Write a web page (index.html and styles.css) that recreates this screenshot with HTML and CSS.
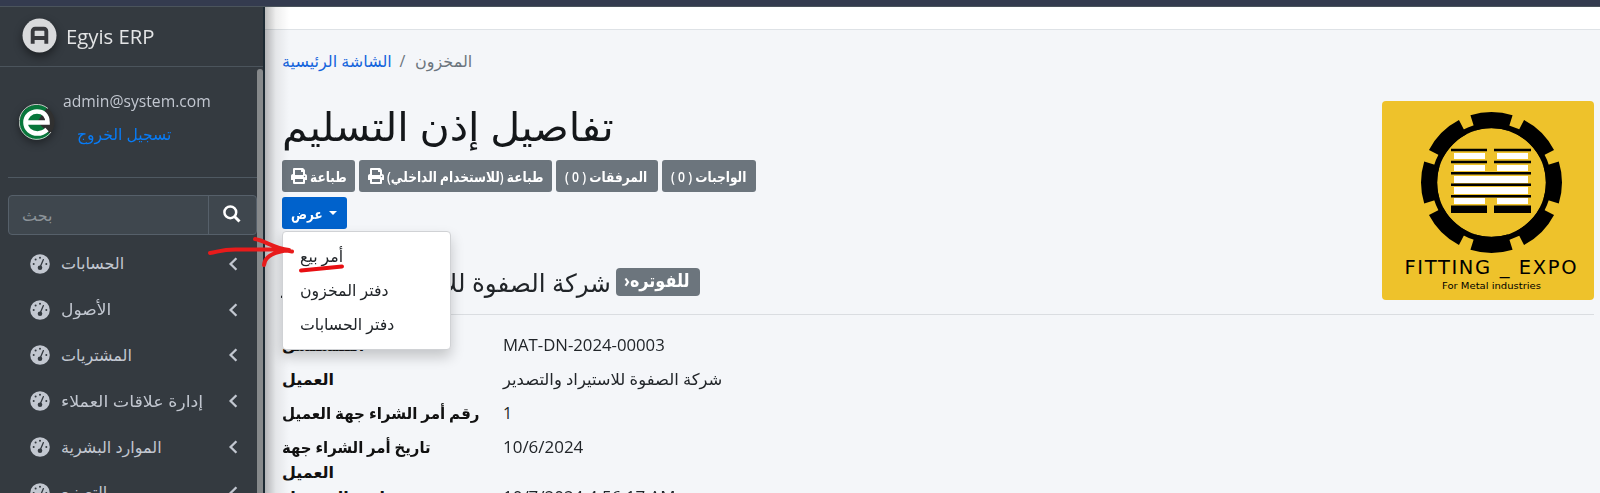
FILE: index.html
```html
<!DOCTYPE html>
<html lang="ar">
<head>
<meta charset="utf-8">
<title>Egyis ERP</title>
<link rel="stylesheet" href="styles.css">
</head>
<body>
<svg class="defs" width="0" height="0">
  <symbol id="gauge" viewBox="0 0 20 20">
    <circle cx="10" cy="10" r="9.8" fill="#c2c7d0"/>
    <g fill="#343a40"><circle cx="10" cy="3.700" r="1"/><circle cx="5.600" cy="5.600" r="1"/><circle cx="3.700" cy="10" r="1"/><circle cx="16.300" cy="10" r="1"/><circle cx="10" cy="13.800" r="2.300"/></g>
    <path d="M10.300 12.800L13.400 5.600" stroke="#343a40" stroke-width="1.300" stroke-linecap="round"/>
  </symbol>
  <symbol id="chev" viewBox="0 0 10 14"><path d="M8.400 1.200L2.600 7l5.800 5.800" fill="none" stroke="#c2c7d0" stroke-width="2.300"/></symbol>
  <symbol id="print" viewBox="0 0 512 512"><path fill="#fff" d="M448 192V77.300a32 32 0 0 0-9.400-22.600L393.400 9.400A32 32 0 0 0 370.700 0H96a32 32 0 0 0-32 32v160c-35.300 0-64 28.700-64 64v112a16 16 0 0 0 16 16h48v96a32 32 0 0 0 32 32h320a32 32 0 0 0 32-32v-96h48a16 16 0 0 0 16-16V256c0-35.300-28.700-64-64-64zm-64 256H128v-96h256v96zm0-224H128V64h192v48a16 16 0 0 0 16 16h48v96zm48 72a24 24 0 1 1 0-48 24 24 0 0 1 0 48z"/></symbol>
</svg>
<div class="topline"></div>
<div class="app">
  <aside class="sidebar">
    <div class="brand">
      <svg class="brand-logo" viewBox="0 0 36 36"><circle cx="18" cy="18" r="17.500" fill="#d9dadc"/><path d="M11 26.500V13.500a2.500 2.500 0 0 1 2.500-2.500h9a2.500 2.500 0 0 1 2.500 2.500v13M11 20.500h14" fill="none" stroke="#38393d" stroke-width="4"/></svg>
      <span class="brand-name">Egyis ERP</span>
    </div>
    <div class="user">
      <svg class="user-logo" viewBox="0 0 36 36"><circle cx="18" cy="18" r="17.500" fill="#303030"/><path d="M28 3.700A17.500 17.500 0 1 0 31 30L18 18z" fill="#08763b"/><path d="M29 4.500A17.500 17.500 0 1 0 32 28" fill="none" stroke="#e8eee9" stroke-width=".8"/><path d="M6 18.500H28.500C28.500 11 24 7.500 18 7.500S6.500 12 6.500 18.500 12 29.500 18.500 29.500c4 0 7-1.500 9.500-4" fill="none" stroke="#fff" stroke-width="4.600"/></svg>
      <div class="user-info"><span class="mail">admin@system.com</span><a class="logout"><span>تسجيل الخروج</span></a></div>
    </div>
    <div class="search"><div class="search-box"><span>بحث</span></div><div class="search-btn"><svg viewBox="0 0 18 18"><circle cx="7.300" cy="7.300" r="5.900" fill="none" stroke="#fff" stroke-width="2.500"/><path d="M11.500 11.500l5 5" stroke="#fff" stroke-width="3"/></svg></div></div>
    <nav class="menu">
      <a><svg class="g"><use href="#gauge"/></svg><span class="m1">الحسابات</span><svg class="c"><use href="#chev"/></svg></a>
      <a><svg class="g"><use href="#gauge"/></svg><span class="m2">الأصول</span><svg class="c"><use href="#chev"/></svg></a>
      <a><svg class="g"><use href="#gauge"/></svg><span class="m3">المشتريات</span><svg class="c"><use href="#chev"/></svg></a>
      <a><svg class="g"><use href="#gauge"/></svg><span class="m4">إدارة علاقات العملاء</span><svg class="c"><use href="#chev"/></svg></a>
      <a><svg class="g"><use href="#gauge"/></svg><span class="m5">الموارد البشرية</span><svg class="c"><use href="#chev"/></svg></a>
      <a><svg class="g"><use href="#gauge"/></svg><span class="m6">التصنيع</span><svg class="c"><use href="#chev"/></svg></a>
    </nav>
    <div class="scrollbar"></div>
  </aside>
  <main class="content">
    <div class="navbar"></div>
    <div class="page">
      <div class="crumbs"><a><span class="c1">الشاشة الرئيسية</span></a><i>/</i><span class="c2">المخزون</span></div>
      <div class="head">
        <div class="head-main">
          <h1><span>تفاصيل إذن التسليم</span></h1>
          <div class="buttons">
            <div class="btn b1"><svg><use href="#print"/></svg><span dir="rtl">طباعة</span></div>
            <div class="btn b2"><svg><use href="#print"/></svg><span dir="rtl">طباعة (للاستخدام الداخلي)</span></div>
            <div class="btn b3"><span dir="rtl">المرفقات ( 0 )</span></div>
            <div class="btn b4"><span dir="rtl">الواجبات ( 0 )</span></div>
          </div>
          <div class="view">
            <div class="btn primary"><span>عرض</span><b class="caret"></b></div>
            <div class="dropdown"><a><span class="d1">أمر بيع</span></a><a><span class="d2">دفتر المخزون</span></a><a><span class="d3">دفتر الحسابات</span></a></div>
          </div>
          <div class="hidden-btn"></div>
          <div class="company"><div class="company-name"><span>شركة الصفوة للاستيراد والتصدير</span></div><div class="badge"><span dir="rtl">للفوتره‹</span></div></div>
        </div>
        <svg class="logo" viewBox="0 0 212 199">
          <rect width="212" height="199" rx="4" fill="#eec22b"/>
          <circle cx="109.500" cy="81.500" r="57" fill="none" stroke="#000" stroke-width="5.500"/>
          <circle cx="109.500" cy="81.500" r="62.500" fill="none" stroke="#000" stroke-width="16" pathLength="100" stroke-dasharray="9.700 2.800" stroke-dashoffset="4.850"/>
          <g fill="#fff"><path d="M72 52h31v6H72zM115 52h31v6h-31zM72 64h31v6H72zM115 64h31v6h-31zM72 75h74v7H72zM72 86h74v7H72zM72 97h31v6H72zM115 97h31v6h-31z"/></g>
          <path d="M69 47.700h36v2.600H69zM112 47.700h37v2.600h-37zM69 59.700h36v2.600H69zM112 59.700h37v2.600h-37zM69 71h80v2.600H69zM69 82.500h80v2.600H69zM69 94h80v2.600H69zM69 104.500h36v7.500H69zM112 104.500h37v7.500h-37z"/>
          <text x="22.500" y="172.500" font-size="19.500" textLength="172">FITTING _ EXPO</text>
          <text x="60" y="188" font-size="9.500" textLength="99" lengthAdjust="spacingAndGlyphs">For Metal industries</text>
        </svg>
      </div>
      <dl class="details">
        <dt><span class="t0">المتسلسل</span></dt><dd><span class="v0">MAT-DN-2024-00003</span></dd>
        <dt><span class="t1">العميل</span></dt><dd><span class="v1">شركة الصفوة للاستيراد والتصدير</span></dd>
        <dt><span class="t2">رقم أمر الشراء جهة العميل</span></dt><dd>1</dd>
        <dt><span class="t3">تاريخ أمر الشراء جهة</span><br><span class="t1">العميل</span></dt><dd><span class="v2">10/6/2024</span></dd>
        <dt class="last"><span class="t4">تاريخ التسجيل</span></dt><dd class="last"><span class="v3">10/7/2024 4:56:17 AM</span></dd>
      </dl>
    </div>
  </main>
</div>
<svg class="marks" viewBox="0 0 100 50"><path d="M2 15C10 14 14 11 30 11.500H74L84 13.500M47 1C58 3 65 10 81 12C68 14 57 17 56 27" fill="none" stroke="#e81b1b" stroke-width="4" stroke-linecap="round" stroke-linejoin="round"/><path d="M93 32.500l41-4" stroke="#e80f12" stroke-width="4" stroke-linecap="round"/></svg>
</body>
</html>
```
FILE: styles.css
```css
*{box-sizing:border-box}
body{margin:0;width:1600px;height:493px;overflow:hidden;background:#f4f6f9;color:#212529;font:16px/25px "Open Sans","DejaVu Sans",sans-serif;position:relative}
.defs{position:absolute}
span{display:inline-block;white-space:nowrap;transform-origin:0 50%}
.topline{height:7px;background:#343b4f;border-bottom:1px solid #4b545c}
.app{display:flex;height:486px;overflow:hidden}
.sidebar{position:relative;z-index:2;width:265px;flex:none;height:486px;overflow:hidden;background:#343a40;color:#c2c7d0;border-right:2px solid #1d2a33}
.content{flex:1;min-width:0;position:relative}
.content::before{content:"";position:absolute;z-index:2;left:0;top:0;width:24px;height:486px;background:linear-gradient(90deg,#0004,#0001 45%,#0000)}
.brand{height:60px;display:flex;align-items:center;padding:0 0 3px 22px;border-bottom:1px solid #4b545c}
.brand-logo{width:35px;height:35px;filter:drop-shadow(0 4px 5px #0007)}
.brand-name{margin:2px 0 0 9px;font-size:20px;color:#e4e5e6;transform:scaleX(1.015)}
.user{margin-left:8px;height:111px;border-bottom:1px solid #4f5962;display:flex;padding:22px 0 0 11px}
.user-logo{width:36px;height:36px;flex:none;margin-top:15px;filter:drop-shadow(0 3px 4px #0006)}
.user-info{display:flex;flex-direction:column;padding-left:8px;gap:8px}
.mail{transform:scaleX(.98)}
.logout{color:#087bf5;padding-left:14px}
.logout span{transform:scaleX(.975)}
.search{margin:17px 6px 0 8px;height:40px;display:flex;background:#3f474e;border:1px solid #56606a;border-radius:4px;color:#8d949a}
.search-box{flex:1;padding:7px 13px}
.search-btn{width:48px;border-left:1px solid #56606a;padding:9px 0 0 14px}
.search-btn svg{width:18px;height:18px}
.menu{padding-top:6px}
.menu a{height:45.800px;display:flex;align-items:center;padding-left:30px}
.menu .g{width:20px;height:20px;margin-right:11px}
.menu .c{width:10px;height:14px;margin:0 25px 0 auto}
.m4{transform:scaleX(1.09)}
.m2{transform:scaleX(1.07)}
.scrollbar{position:absolute;right:0;top:62px;width:6px;height:440px;border-radius:3px 3px 0 0;background:#86898b}
.navbar{height:23px;background:#fff;border-bottom:1px solid #dee2e6}
.page{padding:18px 6px 0 17px}
.crumbs{display:flex;height:27px;align-items:center;color:#6c757d}
.crumbs a{color:#1464dc;width:108px}
.crumbs i{font-style:normal;width:25px;text-align:center}
.head{display:flex;justify-content:space-between;height:240px;border-bottom:1px solid #dadde1}
.logo{width:212px;height:199px;margin-top:26px;font-family:"DejaVu Sans",sans-serif}
h1{margin:26px 0 0;height:59px;font-size:40px;line-height:50px;font-weight:400;color:#14171a}
h1 span{transform:scaleX(1.03)}
.buttons{display:flex;gap:4px}
.btn{height:32px;border-radius:3px;background:#6c757d;color:#fff;display:flex;align-items:center;padding-left:9px;font-size:14px;font-weight:600}
.btn svg{width:16px;height:16px;margin-right:3px;flex:none}
.btn span{flex:none;transform:scaleX(.87)}
.b1{width:73px}.b2{width:193px}.b3{width:102px}.b4{width:94px}
.view{position:relative;margin-top:5px}
.primary{width:65px;background:#0062cc}
.primary span{transform:scaleX(.85)}
.caret{border:4.500px solid transparent;border-top-color:#fff;border-bottom:0;margin-left:1px}
.dropdown{position:absolute;z-index:3;left:0;top:34px;width:169px;height:119px;background:#fff;border:1px solid #d0d2d5;border-radius:4px;padding:7px 17px;box-shadow:0 7px 14px #0003}
.dropdown a{display:flex;height:34px;align-items:center}
.dropdown span{transform:scaleX(.985)}
.hidden-btn{height:30px;width:65px;margin-top:5px;border-radius:3px;background:#b9cdf0}
.company{display:flex;align-items:center;height:30px;margin-top:3px;font-size:25px}
.company-name{width:334px}
.company-name span{transform:scaleX(.983)}
.badge{width:84px;height:28px;border-radius:4px;background:#6c757d;color:#fff;font-weight:700;font-size:18px;padding-left:8px}
.badge span{transform:scaleX(.89)}
.details{display:grid;grid-template-columns:221px 1fr;row-gap:9px;margin:18px 0 0}
dt{font-weight:700;color:#111}dd{margin:0}
.t2{transform:scaleX(.943)}.t3{transform:scaleX(.93)}
.v0{transform:scaleX(1.045)}.v1{transform:scaleX(1.024)}.v2,.v3{transform:scaleX(1.06)}
.last{margin-top:-9px}
.marks{position:absolute;z-index:9;left:208px;top:238px;width:100px;height:50px;overflow:visible}
```
